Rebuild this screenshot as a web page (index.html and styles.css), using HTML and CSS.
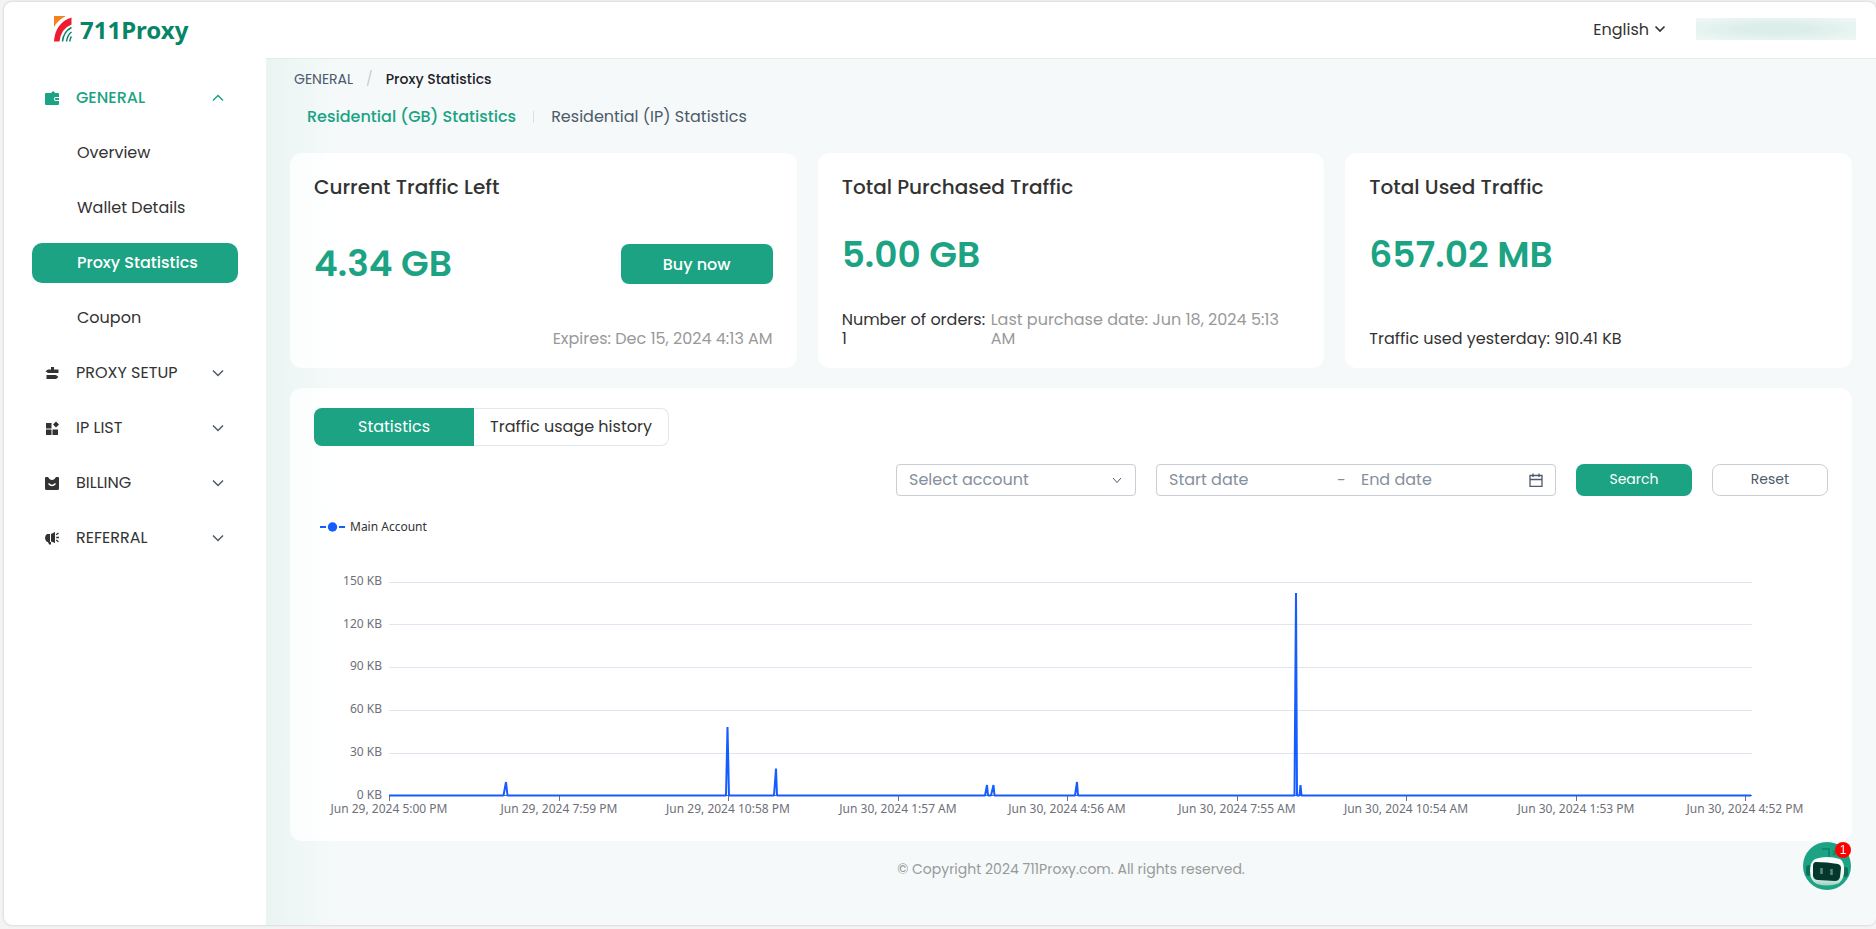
FILE: index.html
```html
<!DOCTYPE html>
<html lang="en">
<head>
  <meta charset="UTF-8">
  <meta name="viewport" content="width=device-width, initial-scale=1.0">
  <title>Proxy Statistics - 711Proxy</title>
  <link rel="stylesheet" href="styles.css">
</head>
<body>
  <div class="app">
    <header class="header">
      <a class="logo" href="#">
        <svg width="18" height="26" viewBox="0 0 18 26" fill="none">
          <path d="M0 0h12Q4 4 0 11Z" fill="#f58220"/>
          <path d="M17.500 1.500v7Q7 12.500 5.500 25.500H0Q1 7 17.500 1.500Z" fill="#ed1c2e"/>
          <path d="M17.500 11.500Q9.500 15.500 8.500 25.500M17.500 16Q13.500 19 12.500 25.500M17.500 20.500Q16 22.500 15.800 25.500" stroke="#078567" stroke-width="1.500"/>
        </svg>
        <span>711Proxy</span>
      </a>
      <div class="header-right">
        <button class="lang" type="button">English
          <svg width="12" height="8" viewBox="0 0 12 8" fill="none" stroke="#333" stroke-width="1.700"><path d="M1.500 1.500 6 6l4.500-4.500"/></svg>
        </button>
        <div class="account"></div>
      </div>
    </header>

    <div class="body">
      <nav class="sidebar">
        <a class="group open" href="#">
          <svg class="icon" viewBox="0 0 14 14" fill="currentColor"><path fill-rule="evenodd" d="M6.500 1.500 8.200 0l1.700 1.500V2H13q1 0 1 1v3h-3.200a2 2 0 0 0 0 4H14v3q0 1-1 1H1q-1 0-1-1V3q0-1 1-1h5.500ZM10.800 7H14v2h-3.200a1 1 0 0 1 0-2Z"/></svg>
          <span>GENERAL</span>
          <svg class="arrow" viewBox="0 0 12 8"><path d="M1 6.500 6 1.500l5 5"/></svg>
        </a>
        <a class="item" href="#">Overview</a>
        <a class="item" href="#">Wallet Details</a>
        <a class="item active" href="#">Proxy Statistics</a>
        <a class="item" href="#">Coupon</a>
        <a class="group" href="#">
          <svg class="icon" viewBox="0 0 14 14" fill="currentColor"><path d="M6 1h3v2.500h4.500V7H3L.500 5.300 3 3.500h3ZM1.500 9h9.500l2.500 2L11 13H1.500Z"/></svg>
          <span>PROXY SETUP</span>
          <svg class="arrow" viewBox="0 0 12 8"><path d="m1 1.500 5 5 5-5"/></svg>
        </a>
        <a class="group" href="#">
          <svg class="icon" viewBox="0 0 14 14" fill="currentColor"><path d="M1 2h5.500v5.500H1ZM1 8.500h5.500V14H1ZM7.500 8.500H13V14H7.500ZM11 .500 14 3.500l-3 3-3-3Z"/></svg>
          <span>IP LIST</span>
          <svg class="arrow" viewBox="0 0 12 8"><path d="m1 1.500 5 5 5-5"/></svg>
        </a>
        <a class="group" href="#">
          <svg class="icon" viewBox="0 0 14 14"><path fill="currentColor" d="M1 1h2l1.500 2q2.500 2 5 0L11 1h2q1 0 1 1v10.500q0 1.500-1.500 1.500h-11Q0 14 0 12.500V2q0-1 1-1Z"/><path d="M3.500 7.500q3.500 4 7 0" fill="none" stroke="#fff" stroke-width="1.300"/></svg>
          <span>BILLING</span>
          <svg class="arrow" viewBox="0 0 12 8"><path d="m1 1.500 5 5 5-5"/></svg>
        </a>
        <a class="group" href="#">
          <svg class="icon" viewBox="0 0 14 14" fill="currentColor"><path d="M2 3h3v8h1v2.500H4L3 11H2Q0 9.500 0 7t2-4ZM6 3l4-2v11L6 10.500Z"/><path d="M11.200 3.800 13.500 2M11.200 6.500H14M11.200 9l2.300 1.700" stroke="currentColor" stroke-width="1.300"/></svg>
          <span>REFERRAL</span>
          <svg class="arrow" viewBox="0 0 12 8"><path d="m1 1.500 5 5 5-5"/></svg>
        </a>
      </nav>

      <main class="main">
        <div class="breadcrumb">
          <a href="#">GENERAL</a>
          <span class="slash">/</span>
          <span class="current">Proxy Statistics</span>
        </div>
        <div class="type-tabs">
          <a class="selected" href="#">Residential (GB) Statistics</a>
          <span class="divider"></span>
          <a href="#">Residential (IP) Statistics</a>
        </div>

        <section class="cards">
          <div class="card">
            <h2>Current Traffic Left</h2>
            <div class="value-row">
              <div class="value">4.34 GB</div>
              <button class="btn buy-btn" type="button">Buy now</button>
            </div>
            <div class="card-foot right"><span class="muted">Expires: Dec 15, 2024 4:13 AM</span></div>
          </div>
          <div class="card">
            <h2>Total Purchased Traffic</h2>
            <div class="value-row"><div class="value">5.00 GB</div></div>
            <div class="card-foot tall">
              <span class="orders">Number of orders: 1</span>
              <span class="muted purchase">Last purchase date: Jun 18, 2024 5:13 AM</span>
            </div>
          </div>
          <div class="card">
            <h2>Total Used Traffic</h2>
            <div class="value-row"><div class="value">657.02 MB</div></div>
            <div class="card-foot tall"><span>Traffic used yesterday: 910.41 KB</span></div>
          </div>
        </section>

        <section class="panel">
          <div class="switch">
            <button class="on" type="button">Statistics</button>
            <button type="button">Traffic usage history</button>
          </div>
          <form class="filters">
            <div class="select-box">
              <select aria-label="Select account">
                <option>Select account</option>
              </select>
              <svg width="10" height="7" viewBox="0 0 10 7" fill="none" stroke="#4e5969"><path d="m1 1 4 4.500L9 1"/></svg>
            </div>
            <div class="date-range">
              <input type="text" placeholder="Start date" aria-label="Start date">
              <span>-</span>
              <input type="text" placeholder="End date" aria-label="End date">
              <svg width="14" height="14" viewBox="0 0 14 14" fill="none" stroke="#4e5969" stroke-width="1.300"><path d="M1 2.500h12v10.800H1ZM1 6.500h12M4 .500v3.500M10 .500v3.500"/></svg>
            </div>
            <button class="btn small" type="submit">Search</button>
            <button class="btn small plain" type="reset">Reset</button>
          </form>

          <svg class="chart" viewBox="0 0 1514 309">
            <!-- legend -->
            <path class="legend-line" d="M6 19h6M25 19h6"/>
            <circle cx="18.500" cy="19" r="4.700" fill="#165dff"/>
            <text class="legend-text" x="36" y="23">Main Account</text>
            <!-- grid -->
            <path class="grid" d="M75 74.500h1363M75 116.500h1363M75 159.500h1363M75 202.500h1363M75 245.500h1363"/>
            <g class="y-labels">
              <text x="68" y="77">150 KB</text>
              <text x="68" y="120">120 KB</text>
              <text x="68" y="162">90 KB</text>
              <text x="68" y="205">60 KB</text>
              <text x="68" y="248">30 KB</text>
              <text x="68" y="291">0 KB</text>
            </g>
            <path class="axis" d="M75 287.500h1363M75.500 288v5M245.500 288v5M414.500 288v5M584.500 288v5M753.500 288v5M923.500 288v5M1092.500 288v5M1262.500 288v5M1431.500 288v5"/>
            <g class="x-labels">
              <text x="75" y="305">Jun 29, 2024 5:00 PM</text>
              <text x="245" y="305">Jun 29, 2024 7:59 PM</text>
              <text x="414" y="305">Jun 29, 2024 10:58 PM</text>
              <text x="584" y="305">Jun 30, 2024 1:57 AM</text>
              <text x="753" y="305">Jun 30, 2024 4:56 AM</text>
              <text x="923" y="305">Jun 30, 2024 7:55 AM</text>
              <text x="1092" y="305">Jun 30, 2024 10:54 AM</text>
              <text x="1262" y="305">Jun 30, 2024 1:53 PM</text>
              <text x="1431" y="305">Jun 30, 2024 4:52 PM</text>
            </g>
            <path class="series" d="M75 287.500H189.500L192 274L193.500 287.500H412L413.500 219L415 287.500H460L462 260.500L463 287.500H671L673 277L674 287.500H677L679.500 277L680.500 287.500H761L763 274L764 287.500H980.500L982 85L983 287.500H985.500L986.500 277L987.500 287.500H1437"/>
          </svg>
        </section>

        <footer class="footer">© Copyright 2024 711Proxy.com. All rights reserved.</footer>
      </main>
    </div>
  </div>

  <button class="chat" type="button" aria-label="Chat">
    <svg width="48" height="48" viewBox="0 0 48 48">
      <defs><linearGradient id="head" x1="0" y1="0" x2="0" y2="1"><stop offset="0" stop-color="#fff"/><stop offset=".7" stop-color="#e8f3f0"/><stop offset="1" stop-color="#9fcfc2"/></linearGradient></defs>
      <circle cx="24" cy="24" r="24" fill="#1ba383"/>
      <path d="M19 7h7v8M30 9l3 2-3 2" fill="none" stroke="#0f8a70" stroke-width="2"/>
      <rect x="3" y="23" width="6" height="11" rx="3" fill="#0b7059"/>
      <rect x="39" y="25" width="6" height="10" rx="3" fill="#0b7059"/>
      <path d="M12 17q12-4 25 0 5 3 4 14-1 9-7 11-10 3-20 0-7-3-7-13 0-9 5-12Z" fill="url(#head)"/>
      <path d="M13 20q11 0 22 2 3 1 3 4l-1 9q-1 4-5 4l-17-1q-4 0-5-4V24q0-4 3-4Z" fill="#05382c"/>
      <path d="M18.500 26v6M28.500 27v6" stroke="#5d8a7e" stroke-width="2.500"/>
    </svg>
    <span class="badge">1</span>
  </button>
</body>
</html>
```

FILE: styles.css
```css
* {
  margin: 0;
  padding: 0;
  box-sizing: border-box;
}

body {
  min-height: 100vh;
  display: flex;
  padding: 2px 0 4px 4px;
  background: #f4f4f4;
  font-family: 'Poppins', 'Inter', sans-serif;
  font-size: 16px;
  color: #333;
}

a {
  color: inherit;
  text-decoration: none;
}

button, input, select {
  font-family: inherit;
  font-size: inherit;
}

button {
  border: none;
  background: none;
  cursor: pointer;
}

.app {
  flex: 1;
  display: flex;
  flex-direction: column;
  background: #fff;
  border-radius: 8px;
  box-shadow: 0 0 3px rgba(0, 0, 0, 0.2);
  overflow: hidden;
}

/* header */
.header {
  height: 56px;
  display: flex;
  justify-content: space-between;
  align-items: center;
  padding: 0 20px 2px 50px;
}

.logo {
  display: flex;
  align-items: center;
  gap: 8px;
  font-family: 'Noto Sans', sans-serif;
  font-size: 24px;
  font-weight: 700;
  color: #078567;
}

.header-right {
  display: flex;
  align-items: center;
  gap: 30px;
}

.lang {
  display: flex;
  align-items: center;
  gap: 5px;
  color: #333;
}

.account {
  width: 160px;
  height: 22px;
  background: radial-gradient(ellipse, #dceeea 30%, #f0f8f6 100%);
}

/* sidebar */
.body {
  flex: 1;
  display: flex;
}

.sidebar {
  width: 262px;
  padding: 20px 28px;
  display: flex;
  flex-direction: column;
  gap: 15px;
}

.group, .item {
  height: 40px;
  display: flex;
  align-items: center;
  border-radius: 10px;
}

.group {
  padding: 0 14px 0 13px;
}

.group span {
  flex: 1;
  margin-left: 17px;
  padding-bottom: 2px;
}

.group.open {
  color: #1ba383;
  font-weight: 500;
}

.item {
  padding: 0 0 2px 45px;
}

.item.active {
  background: #1ba383;
  color: #fff;
  font-weight: 500;
}

.icon {
  width: 14px;
  height: 14px;
}

.arrow {
  width: 12px;
  height: 8px;
  fill: none;
  stroke: #4e5969;
  stroke-width: 1.5;
}

.open .arrow {
  stroke: #1ba383;
}

/* content */
.main {
  flex: 1;
  min-width: 0;
  padding: 9px 24px 20px;
  background: linear-gradient(90deg, #eaf4f3, #f5f9fa 70px);
  border-top: 1px solid #dff0eb;
}

.breadcrumb {
  display: flex;
  align-items: center;
  line-height: 22px;
  padding-left: 4px;
  font-size: 14px;
  color: #4e5969;
}

.slash {
  margin: 0 13px;
  color: #c9cdd4;
}

.current {
  color: #1d2129;
  font-weight: 500;
}

.type-tabs {
  display: flex;
  align-items: center;
  gap: 17px;
  margin: 15px 0 24px;
  padding-left: 17px;
  line-height: 24px;
  color: #4e5969;
}

.type-tabs .selected {
  color: #1ba383;
  font-weight: 500;
}

.divider {
  width: 1px;
  height: 12px;
  background: #dcdfe5;
}

.cards {
  display: grid;
  grid-template-columns: repeat(3, 1fr);
  gap: 21px;
}

.card, .panel {
  background: #fff;
  border-radius: 12px;
}

.card:first-child, .panel {
  background: linear-gradient(90deg, #fafefd, #fff 50px);
}

.card {
  min-height: 215px;
  padding: 20px 24px;
  display: flex;
  flex-direction: column;
  justify-content: space-between;
}

.card h2 {
  font-size: 20px;
  line-height: 28px;
  font-weight: 500;
}

.value-row {
  display: flex;
  justify-content: space-between;
  align-items: center;
  margin-bottom: 2px;
}

.value {
  font-size: 36px;
  line-height: 54px;
  font-weight: 600;
  color: #1ba383;
}

.btn {
  background: #1ba383;
  color: #fff;
  font-weight: 500;
  border-radius: 8px;
}

.buy-btn {
  width: 152px;
  height: 40px;
}

.card-foot {
  display: flex;
  align-items: flex-end;
  gap: 5px;
  line-height: 19px;
}

.card-foot.right {
  justify-content: flex-end;
}

.card-foot.tall {
  min-height: 38px;
}

.muted {
  color: #999;
}

.orders {
  flex: 0 0 144px;
}

.purchase {
  max-width: 300px;
}

/* statistics panel */
.panel {
  margin-top: 20px;
  padding: 20px 24px 24px;
}

.switch {
  display: flex;
}

.switch button {
  height: 38px;
  width: 195px;
  padding-bottom: 2px;
  border: 1px solid #e5e6eb;
  border-left: none;
  border-radius: 0 8px 8px 0;
  color: #333;
}

.switch .on {
  width: 160px;
  border: none;
  border-radius: 8px 0 0 8px;
  background: #1ba383;
  color: #fff;
}

.filters {
  display: flex;
  justify-content: flex-end;
  gap: 20px;
  margin: 18px 0 12px;
}

.select-box, .date-range {
  height: 32px;
  display: flex;
  align-items: center;
  border: 1px solid #c9cdd4;
  border-radius: 4px;
  color: #86909c;
}

.select-box {
  width: 240px;
  padding-right: 13px;
}

.select-box select {
  flex: 1;
  height: 30px;
  padding: 0 0 2px 12px;
  appearance: none;
  border: none;
  outline: none;
  background: transparent;
  color: #86909c;
}

.date-range {
  width: 400px;
  padding: 0 12px;
}

.date-range input {
  flex: 1;
  min-width: 0;
  padding-bottom: 2px;
  border: none;
  outline: none;
  background: transparent;
}

.date-range span {
  margin-right: 15px;
}

.date-range input::placeholder {
  color: #86909c;
}

.btn.small {
  width: 116px;
  height: 32px;
  padding-bottom: 1px;
  font-size: 14px;
  font-weight: 400;
}

.btn.plain {
  background: #fff;
  border: 1px solid #c9cdd4;
  color: #4e5969;
}

/* chart */
.chart {
  display: block;
  width: 100%;
  font-family: 'Noto Sans', sans-serif;
  font-size: 12px;
}

.chart text {
  fill: #6e7079;
}

.chart .legend-text {
  fill: #333;
}

.legend-line {
  stroke: #165dff;
  stroke-width: 2;
}

.grid {
  stroke: #e0e6f1;
}

.axis {
  stroke: #6e7079;
}

.y-labels {
  text-anchor: end;
}

.x-labels {
  text-anchor: middle;
}

.series {
  fill: none;
  stroke: #165dff;
  stroke-width: 2;
  stroke-linejoin: bevel;
}

.footer {
  margin-top: 17px;
  line-height: 22px;
  font-size: 14px;
  text-align: center;
  color: #999;
}

/* chat bubble */
.chat {
  position: fixed;
  right: 25px;
  bottom: 39px;
  width: 48px;
  height: 48px;
}

.badge {
  position: absolute;
  top: 0;
  right: 0;
  width: 16px;
  height: 16px;
  border-radius: 50%;
  background: #f00;
  color: #fff;
  font-family: 'Liberation Sans', sans-serif;
  font-size: 12px;
  line-height: 16px;
}
```
